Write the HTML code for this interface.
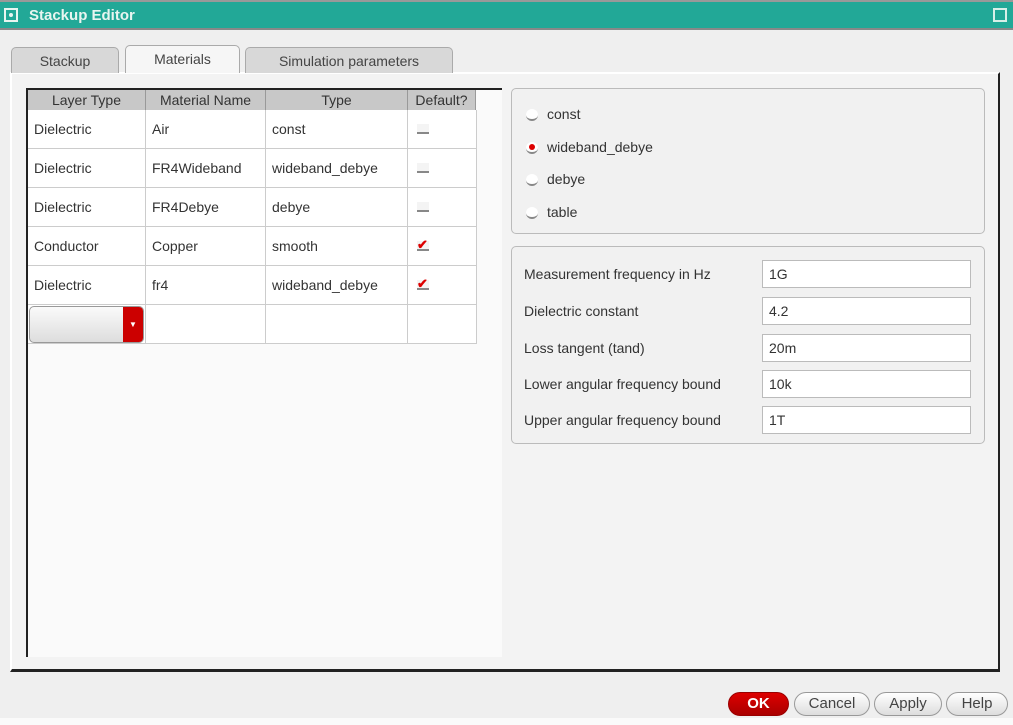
<!DOCTYPE html>
<html><head><style>
*{box-sizing:border-box;margin:0;padding:0}
body{width:1013px;height:725px;background:#efefef;font-family:"Liberation Sans",sans-serif;font-size:14px;color:#333;position:relative;overflow:hidden}
.abs{position:absolute}
.title{left:0;top:0;width:1013px;height:30px;background:#22a897;border-top:2px solid #999;border-bottom:2px solid #888;color:#e8f5f0;font-weight:bold;font-size:15px}
.tab{top:47px;height:26px;background:#d8d8d8;border:1px solid #aaa;border-bottom:none;border-radius:5px 5px 0 0;text-align:center;line-height:26px;color:#444}
.frame{left:10px;top:72px;width:990px;height:600px;border-left:2px solid #fff;border-top:2px solid #fff;border-right:2px solid #222;border-bottom:3px solid #222;background:#f3f3f3}
.tbl{left:26px;top:88px;width:476px;height:569px;background:#fafafa;border-left:2px solid #222;border-top:2px solid #222}
.cell{position:absolute;border-right:1px solid #ccc;border-bottom:1px solid #ccc;background:#fff;padding-left:6px;line-height:38px}
.hd{position:absolute;background:#c8c8c8;border-right:1px solid #999;text-align:center;line-height:21px;color:#333;top:0;height:21px}
.cb{position:absolute;width:12px;height:10px;border-bottom:2px solid #888;background:#f4f4f4}
.grp{background:#f1f1f1;border:1px solid #bbb;border-radius:5px}
.rad{position:absolute;width:12px;height:12px;border-radius:50%;background:#fff;border-bottom:2px solid #888}
.inp{position:absolute;left:762px;width:209px;height:28px;background:#fff;border:1px solid #bbb;padding-left:6px;line-height:26px}
.lbl{position:absolute;left:524px}
.btn{position:absolute;top:692px;height:24px;border:1px solid #999;border-radius:12px;background:linear-gradient(#fff,#ddd);text-align:center;line-height:22px;font-size:15px;color:#444}
</style></head><body>
<div class="abs title"><div class="abs" style="left:4px;top:6px;width:14px;height:14px;border:2px solid #e8f5f0"><div class="abs" style="left:3px;top:3px;width:4px;height:4px;background:#e8f5f0;border-radius:50%"></div></div><span class="abs" style="left:29px;top:5px">Stackup Editor</span><div class="abs" style="left:993px;top:6px;width:14px;height:14px;border:2px solid #d8efe8"></div></div>
<div class="abs frame"></div>
<div class="abs tab" style="left:11px;width:108px">Stackup</div>
<div class="abs tab" style="left:125px;width:115px;background:#f6f6f6;top:45px;height:28px">Materials</div>
<div class="abs tab" style="left:245px;width:208px">Simulation parameters</div>
<div class="abs tbl">
<div class="hd" style="left:0;width:118px">Layer Type</div>
<div class="hd" style="left:118px;width:120px">Material Name</div>
<div class="hd" style="left:238px;width:142px">Type</div>
<div class="hd" style="left:380px;width:68px">Default?</div>
</div>
<div class="abs" style="left:28px;top:110px">
<div class="cell" style="left:0;top:0;width:118px;height:39px">Dielectric</div><div class="cell" style="left:118px;top:0;width:120px;height:39px">Air</div><div class="cell" style="left:238px;top:0;width:142px;height:39px">const</div><div class="cell" style="left:380px;top:0;width:69px;height:39px"></div>
<div class="cell" style="left:0;top:39px;width:118px;height:39px">Dielectric</div><div class="cell" style="left:118px;top:39px;width:120px;height:39px">FR4Wideband</div><div class="cell" style="left:238px;top:39px;width:142px;height:39px">wideband_debye</div><div class="cell" style="left:380px;top:39px;width:69px;height:39px"></div>
<div class="cell" style="left:0;top:78px;width:118px;height:39px">Dielectric</div><div class="cell" style="left:118px;top:78px;width:120px;height:39px">FR4Debye</div><div class="cell" style="left:238px;top:78px;width:142px;height:39px">debye</div><div class="cell" style="left:380px;top:78px;width:69px;height:39px"></div>
<div class="cell" style="left:0;top:117px;width:118px;height:39px">Conductor</div><div class="cell" style="left:118px;top:117px;width:120px;height:39px">Copper</div><div class="cell" style="left:238px;top:117px;width:142px;height:39px">smooth</div><div class="cell" style="left:380px;top:117px;width:69px;height:39px"></div>
<div class="cell" style="left:0;top:156px;width:118px;height:39px">Dielectric</div><div class="cell" style="left:118px;top:156px;width:120px;height:39px">fr4</div><div class="cell" style="left:238px;top:156px;width:142px;height:39px">wideband_debye</div><div class="cell" style="left:380px;top:156px;width:69px;height:39px"></div>
<div class="cell" style="left:0;top:195px;width:118px;height:39px"></div><div class="cell" style="left:118px;top:195px;width:120px;height:39px"></div><div class="cell" style="left:238px;top:195px;width:142px;height:39px"></div><div class="cell" style="left:380px;top:195px;width:69px;height:39px"></div>
</div>
<div class="cb" style="left:417px;top:124px"></div>
<div class="cb" style="left:417px;top:163px"></div>
<div class="cb" style="left:417px;top:202px"></div>
<div class="cb" style="left:417px;top:241px;color:#d00;font-size:13px;line-height:8px;font-weight:bold">✔</div>
<div class="cb" style="left:417px;top:280px;color:#d00;font-size:13px;line-height:8px;font-weight:bold">✔</div>
<div class="abs" style="left:29px;top:306px;width:115px;height:37px;border:1px solid #999;border-radius:5px;background:linear-gradient(#fafafa,#ddd)"><div class="abs" style="right:0;top:0;width:20px;height:35px;background:#c00;border-radius:0 4px 4px 0;color:#fff;font-size:8px;text-align:center;line-height:35px">▼</div></div>
<div class="abs grp" style="left:511px;top:88px;width:474px;height:146px"></div>
<div class="rad" style="left:526px;top:109px"></div><span class="abs" style="left:547px;top:106px">const</span>
<div class="rad" style="left:526px;top:142px"><div class="abs" style="left:3px;top:2px;width:6px;height:6px;border-radius:50%;background:#d00"></div></div><span class="abs" style="left:547px;top:139px">wideband_debye</span>
<div class="rad" style="left:526px;top:174px"></div><span class="abs" style="left:547px;top:171px">debye</span>
<div class="rad" style="left:526px;top:207px"></div><span class="abs" style="left:547px;top:204px">table</span>
<div class="abs grp" style="left:511px;top:246px;width:474px;height:198px"></div>
<span class="lbl" style="top:266px">Measurement frequency in Hz</span><div class="inp" style="top:260px">1G</div>
<span class="lbl" style="top:303px">Dielectric constant</span><div class="inp" style="top:297px">4.2</div>
<span class="lbl" style="top:340px">Loss tangent (tand)</span><div class="inp" style="top:334px">20m</div>
<span class="lbl" style="top:376px">Lower angular frequency bound</span><div class="inp" style="top:370px">10k</div>
<span class="lbl" style="top:412px">Upper angular frequency bound</span><div class="inp" style="top:406px">1T</div>
<div class="btn" style="left:728px;width:61px;background:linear-gradient(#d00,#a00);color:#fff;font-weight:bold;border-color:#900">OK</div>
<div class="btn" style="left:794px;width:76px">Cancel</div>
<div class="btn" style="left:874px;width:68px">Apply</div>
<div class="btn" style="left:946px;width:62px">Help</div>
<div class="abs" style="left:0;top:718px;width:1013px;height:7px;background:#fafafa"></div>
</body></html>
